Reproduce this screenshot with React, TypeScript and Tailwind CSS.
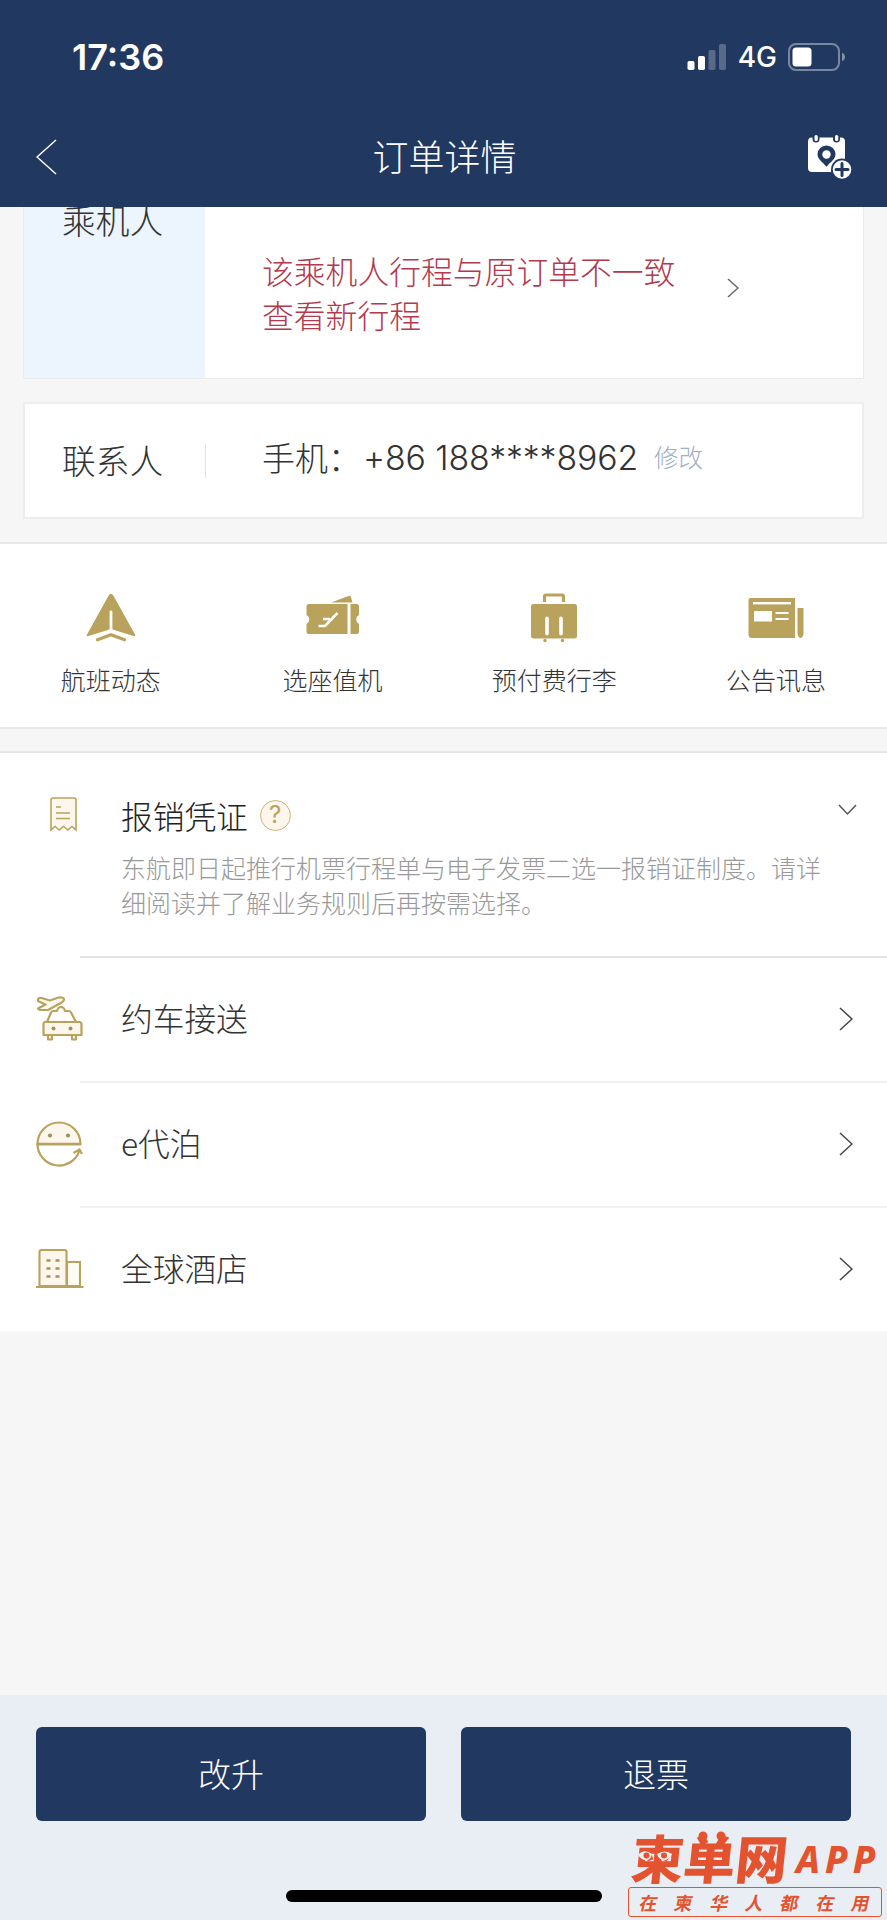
import React from 'react';

const GOLD = '#b9a25c';

type IconProps = { className?: string };

const SignalIcon: React.FC<IconProps> = ({ className }) => (
  <svg className={className} width="40" height="28" viewBox="0 0 40 28" fill="#fff">
    <rect x="0.5" y="18" width="7" height="9" rx="1.8" />
    <rect x="11" y="13" width="7" height="14" rx="1.8" />
    <rect x="21.5" y="7" width="7" height="20" rx="1.8" opacity="0.25" />
    <rect x="32" y="1" width="7" height="26" rx="1.8" opacity="0.25" />
  </svg>
);

const BatteryIcon: React.FC<IconProps> = ({ className }) => (
  <svg className={className} width="58" height="28" viewBox="0 0 58 28">
    <rect x="1" y="1" width="50" height="26" rx="7" fill="none" stroke="#fff" strokeWidth="2" opacity="0.4" />
    <path d="M54 10c4 1 4 7 0 8z" fill="#fff" opacity="0.45" />
    <rect x="4.5" y="4.5" width="19" height="19" rx="3.5" fill="#fff" />
  </svg>
);

const Chevron: React.FC<IconProps & { w: number; h: number }> = ({ className, w, h }) => (
  <svg className={className} width={w + 2} height={h + 2} fill="none" stroke="currentColor" strokeWidth="1.5">
    <path d={`M1 1L${w + 1} ${h / 2 + 1}L1 ${h + 1}`} />
  </svg>
);

const CalendarPinIcon: React.FC<IconProps> = ({ className }) => (
  <svg className={className} width="46" height="46" viewBox="0 0 46 46">
    <path d="M5 3.5h29a4 4 0 0 1 4 4V38H5a4 4 0 0 1-4-4V7.5a4 4 0 0 1 4-4z" fill="#fff" />
    <rect x="5.5" y="-1" width="7" height="9.5" rx="3.5" fill="#213860" />
    <rect x="26" y="-1" width="7" height="9.5" rx="3.5" fill="#213860" />
    <rect x="7.5" y="1" width="3.3" height="6" rx="1.6" fill="#fff" />
    <rect x="28" y="1" width="3.3" height="6" rx="1.6" fill="#fff" />
    <path d="M19.5 11.5a9 9 0 0 1 9 8.800c0 5-5.500 8-9 12.500-3.500-4.500-9-7.500-9-12.500a9 9 0 0 1 9-8.800z" fill="#213860" />
    <circle cx="19.5" cy="20.5" r="4.2" fill="#fff" />
    <circle cx="35" cy="35.500" r="11" fill="#213860" />
    <circle cx="35" cy="35.500" r="9.300" fill="#fff" />
    <path d="M35 29.500v12M29 35.500h12" stroke="#213860" strokeWidth="3" strokeLinecap="round" />
  </svg>
);

const FlightIcon = () => (
  <svg width="50" height="50" viewBox="0 0 50 50" fill={GOLD}>
    <path d="M22.8 2.2Q25 -.8 27.2 2.2L49 41.5Q50 43.8 47.5 43L25 36 2.5 43Q0 43.8 1 41.5z" />
    <path d="M25 19v17.5" stroke="#fff" strokeWidth="2.8" strokeLinecap="round" />
    <path d="M11.5 46.800l13.500-5 13.500 5" fill="none" stroke={GOLD} strokeWidth="3.2" strokeLinecap="round" />
  </svg>
);

const TicketIcon = () => (
  <svg width="54" height="50" viewBox="0 0 54 50" fill={GOLD}>
    <path d="M25 9.5L42.5 3q2-.7 2.5 1l1.5 5.500z" />
    <path d="M3 11h38.5v30H3q-2.500 0-2.500-2.500V31a5 5 0 0 0 0-9v-8.500Q.5 11 3 11z" />
    <path d="M44.5 11h6q2.500 0 2.500 2.500V22a5 5 0 0 0 0 9v7.500q0 2.500-2.500 2.500h-6z" />
    <path d="M12.5 33h6.500L31.5 20M17 26h7" fill="none" stroke="#fff" strokeWidth="2.6" />
  </svg>
);

const LuggageIcon = () => (
  <svg width="46" height="50" viewBox="0 0 46 50">
    <path d="M13.5 9V3.5Q13.5 2 15 2h16q1.500 0 1.500 1.500V9" fill="none" stroke={GOLD} strokeWidth="3.2" />
    <rect x="0" y="11" width="46" height="34.5" rx="2.5" fill={GOLD} />
    <rect x="14.2" y="23.5" width="3.6" height="19" rx="1.8" fill="#fff" />
    <rect x="28.2" y="23.5" width="3.6" height="19" rx="1.8" fill="#fff" />
    <circle cx="14" cy="47.5" r="1.7" fill={GOLD} />
    <circle cx="31.5" cy="47.5" r="1.7" fill={GOLD} />
  </svg>
);

const NewsIcon = () => (
  <svg width="56" height="50" viewBox="0 0 56 50">
    <path d="M2.5 5H47v40H4q-3.500 0-3.500-3.500V7q0-2 2-2z" fill={GOLD} />
    <rect x="5" y="9" width="38" height="2.4" fill="#fff" />
    <rect x="6" y="18" width="18" height="10.5" fill="#fff" />
    <path d="M27.5 20h13M27.5 26h13" stroke="#fff" strokeWidth="2" />
    <path d="M49.5 15h6v26q-1 4-3 4t-3-4z" fill={GOLD} />
  </svg>
);

const ReceiptIcon = () => (
  <svg width="27" height="35" viewBox="0 0 27 35" fill="#fcf6ec" stroke={GOLD} strokeWidth="1.6">
    <path d="M1 33V3q0-2 2-2h21q2 0 2 2v30l-4-3.500-4.200 3.500-4.300-3.500L9.200 33 5 29.500z" />
    <path d="M6 10h5M6 16h14M6 21.500h14" />
  </svg>
);

const CarIcon = () => (
  <svg width="48" height="46" viewBox="0 0 48 46" fill="none" stroke={GOLD} strokeWidth="2.2" strokeLinejoin="round">
    <path d="M2 3Q3 1.500 5.500 2L14 4.500l8.500-3Q28 1 28 3.500q0 2-4 4L12 14H4l-2-1.500L9.500 8.500 2 5z" fill="#fffaf0" />
    <path d="M11 26l4-9.500q.5-1.500 2.500-1.500H21q1-4 4-4t4 4h3.500q2 0 2.500 1.500L40 26" fill="#fff" />
    <path d="M12 39v4.500h4V39M36 39v4.500h4V39" fill="#fcf6ec" />
    <path d="M9 26h34q2.500 0 2.500 2.500V39h-38V28.500Q7.500 26 9 26z" fill="#fcf6ec" />
    <circle cx="17.5" cy="32.5" r="2" fill="#9f9263" stroke="none" />
    <circle cx="34.5" cy="32.5" r="2" fill="#9f9263" stroke="none" />
  </svg>
);

const ParkingIcon = () => (
  <svg width="48" height="46" viewBox="0 0 48 46" fill="none" stroke={GOLD} strokeWidth="2.2">
    <path d="M1.500 23a21.500 21.500 0 0 1 43 0z" fill="#fcf6ec" />
    <path d="M1.500 23a21.500 21.500 0 0 0 42 6.500" />
    <path d="M.5 23.200h44.500" strokeWidth="2.8" />
    <path d="M37.500 32l6-3.500 2.500 4.500" />
    <circle cx="14" cy="14.5" r="2.1" fill="#9f9263" stroke="none" />
    <circle cx="32" cy="14.5" r="2.1" fill="#9f9263" stroke="none" />
  </svg>
);

const HotelIcon = () => (
  <svg width="48" height="46" viewBox="0 0 48 46" fill="none" stroke={GOLD} strokeWidth="2.1">
    <path d="M31 16h13v24H31z" fill="#fffcf6" />
    <path d="M3.5 40V6q0-2 2-2h23q2 0 2 2v34z" fill="#fcf6ec" />
    <path d="M0 41h47.500" />
    <path d="M10.500 14.500h4M19.500 14.500h4M10.500 22.500h4M19.500 22.500h4M10.500 30.500h4M19.500 30.500h4" stroke="#9f9263" strokeWidth="2.4" />
  </svg>
);

const shortcuts = [
  { label: '航班动态', icon: <FlightIcon /> },
  { label: '选座值机', icon: <TicketIcon /> },
  { label: '预付费行李', icon: <LuggageIcon /> },
  { label: '公告讯息', icon: <NewsIcon /> },
];

const services = [
  { label: '约车接送', icon: <CarIcon /> },
  { label: 'e代泊', icon: <ParkingIcon /> },
  { label: '全球酒店', icon: <HotelIcon /> },
];

const Header = () => (
  <header className="h-[207px] bg-[#213860] text-white">
    <div className="flex h-[113px] items-center pl-[72px] pr-[41px]">
      <span className="font-['Inter',sans-serif] text-[36px] font-semibold leading-none">17:36</span>
      <SignalIcon className="ml-auto" />
      <span className="ml-[11px] font-['Inter',sans-serif] text-[28px] font-medium leading-none">4G</span>
      <BatteryIcon className="ml-[11px]" />
    </div>
    <div className="flex h-[88px] items-center justify-between pl-[36px] pr-[34px]">
      <div className="w-[46px]">
        <Chevron className="rotate-180" w={19} h={34} />
      </div>
      <h1 className="pb-[4px] text-[36px] font-light leading-none">订单详情</h1>
      <CalendarPinIcon />
    </div>
  </header>
);

const App: React.FC = () => {
  return (
    <div className="relative flex h-[1920px] w-[887px] flex-col overflow-hidden bg-[#f6f6f6] font-['Noto_Sans_CJK_SC',sans-serif] font-light text-[#333]">
      <Header />

      {/* Passenger */}
      <section className="mx-[23px] flex h-[172px] overflow-hidden border border-t-0 border-[#ebebeb] bg-white">
        <div className="w-[181px] bg-[#ecf5fe] pl-[38px] text-[33.7px] leading-[25px]">乘机人</div>
        <div className="flex grow items-start pl-[57px] pt-[41px]">
          <p className="w-[430px] text-[31.8px] leading-[44px] text-[#b3394c]">
            该乘机人行程与原订单不一致
            <br />
            查看新行程
          </p>
          <Chevron className="ml-[35px] mt-[30px] text-[#666]" w={10} h={18} />
        </div>
      </section>

      {/* Contact */}
      <section className="mx-[23px] mt-[23px] flex h-[117px] items-center border-2 border-[#ededed] bg-white">
        <div className="flex h-[34px] w-[181px] items-center border-r border-[#e2e2e2] pl-[37px] text-[33.7px]">联系人</div>
        <div className="flex items-center pb-[5px] pl-[56px] text-[33px] leading-none">
          <span className="w-[101px] whitespace-nowrap pb-[2px]">手机：</span>
          <span className="w-[291px] font-['Inter',sans-serif] text-[33.8px] tracking-[-0.1px]">+86 188****8962</span>
          <span className="pb-[2px] text-[24.5px] text-[#9fb0c6]">修改</span>
        </div>
      </section>

      {/* Shortcuts */}
      <section className="mt-[23px] grid h-[187px] grid-cols-4 border-y-2 border-[#e8e8e8] bg-white pt-[49px]">
        {shortcuts.map((s) => (
          <div key={s.label} className="flex flex-col items-center">
            {s.icon}
            <span className="mt-[24px] text-[25px] leading-[25px]">{s.label}</span>
          </div>
        ))}
      </section>

      {/* Services */}
      <section className="mt-[22px] h-[580px] border-t-2 border-[#e6e6e6] bg-white">
        <div className="flex h-[203px] pl-[50px]">
          <div className="w-[71px] pt-[44px]">
            <ReceiptIcon />
          </div>
          <div className="w-[710px] pt-[45px]">
            <div className="flex items-center">
              <span className="text-[31.7px] leading-[34px] text-[#222]">报销凭证</span>
              <span className="ml-[12px] flex size-[31px] items-center justify-center rounded-full border-[1.5px] border-[#c8b679] bg-[#fcf6ec] font-['Inter',sans-serif] text-[24px] font-normal leading-none text-[#b9a25c]">
                ?
              </span>
            </div>
            <p className="mt-[18px] text-[25px] leading-[35px] text-[#999]">
              东航即日起推行机票行程单与电子发票二选一报销证制度。请详
              <br />
              细阅读并了解业务规则后再按需选择。
            </p>
          </div>
          <svg className="ml-[7px] mt-[51px]" width="19" height="12" fill="none" stroke="#555" strokeWidth="1.5">
            <path d="M1 1l8.5 9L18 1" />
          </svg>
        </div>
        {services.map((s, i) => (
          <div key={s.label} className="h-[125px]">
            <div className={`ml-[80px] h-[2px] ${i === 0 ? 'bg-[#e3e3e3]' : 'bg-[#f1f1f1]'}`} />
            <div className="flex h-[122px] items-center pl-[36px] pr-[34px]">
              {s.icon}
              <span className="ml-[37px] pb-[2px] text-[31.7px] leading-none">{s.label}</span>
              <Chevron className="ml-auto text-[#444]" w={12} h={22} />
            </div>
          </div>
        ))}
      </section>

      {/* Actions */}
      <footer className="mt-auto h-[225px] bg-[#e9edf4] px-[36px] pt-[32px]">
        <div className="grid grid-cols-2 gap-[35px]">
          <button className="h-[94px] rounded-md bg-[#213860] text-[33px] font-light text-white">改升</button>
          <button className="h-[94px] rounded-md bg-[#213860] text-[33px] font-light text-white">退票</button>
        </div>
        <div className="mx-auto mt-[69px] h-[12px] w-[316px] rounded-full bg-black" />
      </footer>

      {/* Watermark */}
      <div className="absolute bottom-[3px] right-[5px] w-[254px] text-[#e4532f]">
        <div className="relative flex h-[54px] items-center pl-[4px]">
          <span className="-skew-x-6 whitespace-nowrap text-[52px] font-black leading-none">柬单网</span>
          <span className="ml-[8px] mt-[2px] font-['Noto_Sans',sans-serif] text-[37px] font-extrabold italic leading-none tracking-[5px]">APP</span>
          {/* eyes and ears of the mascot characters */}
          <svg className="absolute left-0 top-0" width="110" height="54" viewBox="0 0 110 54">
            <path d="M10 25q6-7 14-1-1 6-6 6t-8-5zM29 24q8-5 15 0-3 6-8 6t-7-6z" fill="#e9edf4" />
            <circle cx="18.500" cy="25.500" r="3" fill="#e4532f" />
            <circle cx="36" cy="25.500" r="3" fill="#e4532f" />
            <circle cx="75" cy="6" r="4.500" fill="#e4532f" />
            <circle cx="93" cy="6" r="4.500" fill="#e4532f" />
          </svg>
        </div>
        <div className="mt-[3px] flex h-[30px] items-center justify-between rounded-[3px] border border-[#e4532f] px-[11px]">
          {'在柬华人都在用'.split('').map((c, i) => (
            <span key={i} className="-skew-x-12 text-[18px] font-bold leading-none">{c}</span>
          ))}
        </div>
      </div>
    </div>
  );
};

export default App;
